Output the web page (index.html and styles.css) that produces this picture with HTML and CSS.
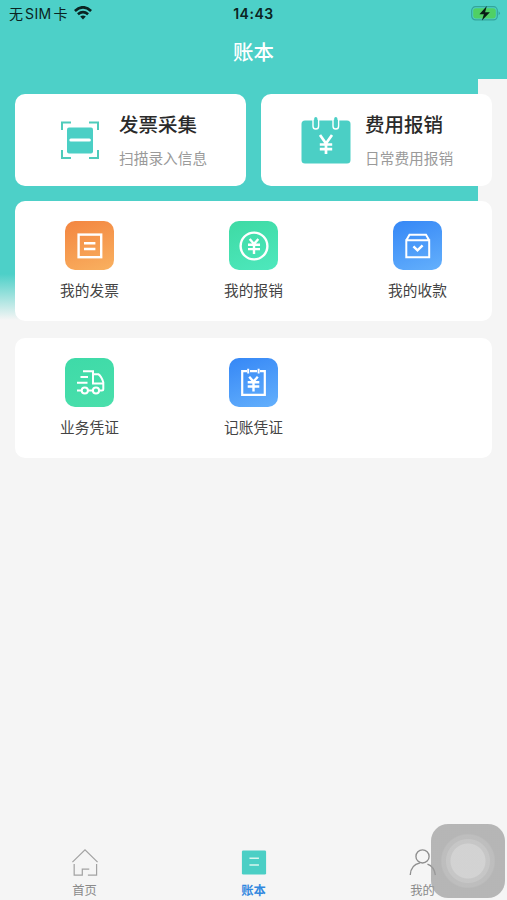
FILE: index.html
```html
<!DOCTYPE html>
<html lang="zh-CN">
<head>
<meta charset="utf-8">
<title>账本</title>
<link rel="stylesheet" href="styles.css">
</head>
<body>
<header class="header">
  <div class="status">
    <div class="carrier"><span class="carrier-name">无<span class="sim">SIM</span>卡</span>
      <svg class="wifi" width="18" height="14" viewBox="0 0 18 14" fill="none" stroke="#0b2422" stroke-width="2.7"><path d="M.9 4.9Q9-2.3 17.1 4.9M3.9 8.2q5.1-4.2 10.2 0"/><path d="M6.2 10.6Q9 8.6 11.8 10.6L9 13.4z" fill="#0b2422" stroke="none"/></svg>
    </div>
    <time class="time">14:43</time>
    <svg class="battery" width="30" height="16" viewBox="0 0 30 16"><rect x=".7" y=".7" width="25.6" height="13.2" rx="3.8" fill="none" stroke="#34a59b" stroke-width="1.2"/><rect x="2.2" y="2.2" width="22.6" height="10.2" rx="2.4" fill="#4fd065"/><path d="M27.6 5.3q2.6 2 0 4z" fill="#34a59b"/><path d="M15.8.1 8.4 8.2h4.5l-2 6.4 8-8.3h-4.8z" fill="#081c14"/></svg>
  </div>
  <h1 class="title">账本</h1>
</header>

<main class="content">
  <section class="features">
    <article class="feature">
      <svg class="feature-icon" width="50" height="50" viewBox="0 0 50 50"><path d="M7 15V7.5h9M34 7.5h9V15M7 35v8h9M34 43h9v-8" fill="none" stroke="#4fcbbb" stroke-width="2"/><rect x="12" y="12.5" width="26" height="26" rx="2" fill="#4bcfc5"/><path d="M15.8 25h18.6" stroke="#fff" stroke-width="3" stroke-linecap="round"/></svg>
      <div class="feature-text"><h2>发票采集</h2><p>扫描录入信息</p></div>
    </article>
    <article class="feature">
      <svg class="feature-icon" width="50" height="50" viewBox="0 0 50 50"><rect x=".5" y="5.5" width="49" height="43" rx="3.5" fill="#4bcfc5"/><g stroke="#fff" stroke-width="1.4" fill="#4bcfc5"><rect x="12" y="2" width="5.6" height="12" rx="2.8"/><rect x="32" y="2" width="5.6" height="12" rx="2.8"/></g><path d="M11 0h8v4.8h-8zM31 0h8v4.8h-8z" fill="#fff"/><path d="M14.8 3.6v6M34.8 3.6v6" stroke="#4bcfc5" stroke-width="3.2" stroke-linecap="round"/><path d="M19 20l6 8.5 6-8.5M18.8 29.5h12.4M18.8 34.1h12.4M25 28.5v10.5" fill="none" stroke="#fff" stroke-width="2.7"/></svg>
      <div class="feature-text"><h2>费用报销</h2><p>日常费用报销</p></div>
    </article>
  </section>

  <section class="panel">
    <div class="entry">
      <svg class="tile orange" viewBox="0 0 49 49"><rect x="13.6" y="13.6" width="22.6" height="22.6"/><path d="M19 22.2h11.4M19 28h11.4"/></svg>
      <span>我的发票</span>
    </div>
    <div class="entry">
      <svg class="tile green" viewBox="0 0 49 49"><circle cx="25" cy="25" r="13.4"/><path d="M20.7 18l4.3 5 4.3-5M19 23.7h12M19 28.1h12M25 23v10"/></svg>
      <span>我的报销</span>
    </div>
    <div class="entry">
      <svg class="tile blue" viewBox="0 0 49 49"><path d="M13.3 19.3h22.9v17H13.3zM13.3 19.3l3.2-5.6h16.5l3.2 5.6" stroke-width="2"/><path d="M20.4 25.4l4.1 4 5.1-5.1"/></svg>
      <span>我的收款</span>
    </div>
  </section>

  <section class="panel panel-last">
    <div class="entry">
      <svg class="tile green" viewBox="0 0 49 49"><g stroke-width="2"><path d="M18 13.3h10v12.3h10M28 16.2h5.3q3 2 5 8v6.8q0 1.5-1.5 1.5h-2M15.5 19h7.5M12 24.7h10.5M12 32.5h4.7M23 32.5h4.3"/><circle cx="19.8" cy="32.5" r="3.1"/><circle cx="31" cy="32.5" r="3.1"/></g></svg>
      <span>业务凭证</span>
    </div>
    <div class="entry">
      <svg class="tile blue" viewBox="0 0 49 49"><path d="M18 13.2h-4.8v23.6h22.6V13.2H31M21 13.2h7" stroke-width="2.2"/><path d="M19.2 10.8v4.8M29.6 10.8v4.8" stroke-width="2"/><path d="M20.2 18.8l4.3 4.8 4.3-4.8M18.7 24.3h11.6M18.7 28.5h11.6M24.5 23.5v10"/></svg>
      <span>记账凭证</span>
    </div>
  </section>
</main>

<nav class="tabs">
  <a class="tab">
    <svg width="28" height="30" viewBox="0 0 28 30" fill="none" stroke="#a2a2a2" stroke-width="1.25"><path d="M1 14.6 14 2l13 12.6M2.8 16.5V28h8.4v-6.2h7.2M17 28h9V16.5"/></svg>
    <span>首页</span>
  </a>
  <a class="tab active">
    <svg width="28" height="30" viewBox="0 0 28 30"><rect x="1.5" y="2.5" width="25" height="25" rx="1.5" fill="#4bcfc5"/><path d="M9.3 10.5h9.8M9.3 17.5h9.8" stroke="#d8f6ee" stroke-width="1.5"/></svg>
    <span>账本</span>
  </a>
  <a class="tab">
    <svg width="28" height="30" viewBox="0 0 28 30" fill="none" stroke="#8f8f8f" stroke-width="1.4"><circle cx="13.5" cy="8.7" r="6.8"/><path d="M.8 28q.4-10.8 10.2-12.7M18.6 16.7Q25.6 19 26.8 28"/></svg>
    <span>我的</span>
  </a>
</nav>
<div class="assistive"></div>
</body>
</html>
```

FILE: styles.css
```css
* { box-sizing: border-box; margin: 0; }
body {
  height: 900px;
  display: flex;
  flex-direction: column;
  overflow: hidden;
  background: #f5f5f5;
  font-family: "Liberation Sans", "Noto Sans CJK SC", sans-serif;
}
.header { height: 79px; background: #4dd0c8; }
.status {
  height: 27px;
  padding: 0 6px 0 9px;
  display: grid;
  grid-template-columns: 1fr auto 1fr;
  align-items: center;
  color: #0b2422;
}
.carrier { display: flex; align-items: center; gap: 7px; font-size: 14px; line-height: 20px; }
.wifi { margin-top: -2px; }
.carrier-name { width: 58px; white-space: nowrap; }
.sim { margin: 0 2px; font-family: Inter, sans-serif; letter-spacing: .4px; }
.time { margin-right: 3px; font: 600 14px/20px Inter, sans-serif; letter-spacing: .55px; }
.battery { justify-self: end; }
.title {
  text-align: center;
  color: #fff;
  font-size: 20.5px;
  line-height: 30px;
  padding-top: 11px;
  font-weight: 500;
}
.content {
  flex: 1;
  padding: 15px 15px 0;
  background: linear-gradient(#4dd0c8 0 195px, #f5f5f5 241px) no-repeat 0 0 / 478px 241px;
}
.features { display: grid; grid-template-columns: 1fr 1fr; gap: 15px; height: 92px; }
.feature {
  display: flex;
  align-items: flex-start;
  padding: 17px 0 0 40px;
  gap: 14px;
  background: #fff;
  border-radius: 10px;
}
.feature-icon { margin-top: 4px; flex: none; }
.feature h2 { font-size: 19.5px; line-height: 28px; font-weight: 500; color: #2a2a2a; white-space: nowrap; }
.feature p { margin-top: 9px; font-size: 14.7px; line-height: 22px; color: #9a9a9a; white-space: nowrap; }
.panel {
  display: grid;
  grid-template-columns: repeat(3, 60px);
  column-gap: 104px;
  justify-content: center;
  height: 120px;
  margin-top: 15px;
  padding-top: 19.5px;
  background: #fff;
  border-radius: 10px;
}
.panel-last { margin-top: 17px; }
.entry { display: flex; flex-direction: column; align-items: center; gap: 10px; font-size: 14.7px; line-height: 22px; color: #444; white-space: nowrap; }
.tile { width: 49px; height: 49px; border-radius: 10px; fill: none; stroke: #fff; stroke-width: 2.4; }
.orange { background: linear-gradient(160deg, #f38540, #f9b160); }
.green { background: linear-gradient(160deg, #3edaa4, #4ee8bd); }
.blue { background: linear-gradient(160deg, #3587f6, #64b0fc); }
.panel-last .green { background: linear-gradient(160deg, #3edaa8, #4adfab); }
.tabs { display: flex; height: 53px; }
.tab { flex: 1; display: flex; flex-direction: column; align-items: center; padding-top: 1px; font-size: 12.3px; line-height: 18px; color: #8a8a8a; }
.tab span { margin-top: 5px; }
.active { color: #3288df; font-weight: 600; }
.assistive {
  position: fixed;
  left: 431px;
  top: 824px;
  width: 74px;
  height: 74px;
  border-radius: 17px;
  background: radial-gradient(circle at center, #c6c6c6 0 17px, #b5b5b5 18px 21.5px, #a9a9a9 22.5px 26px, #9e9e9e 27.5px);
  opacity: .72;
}
```
